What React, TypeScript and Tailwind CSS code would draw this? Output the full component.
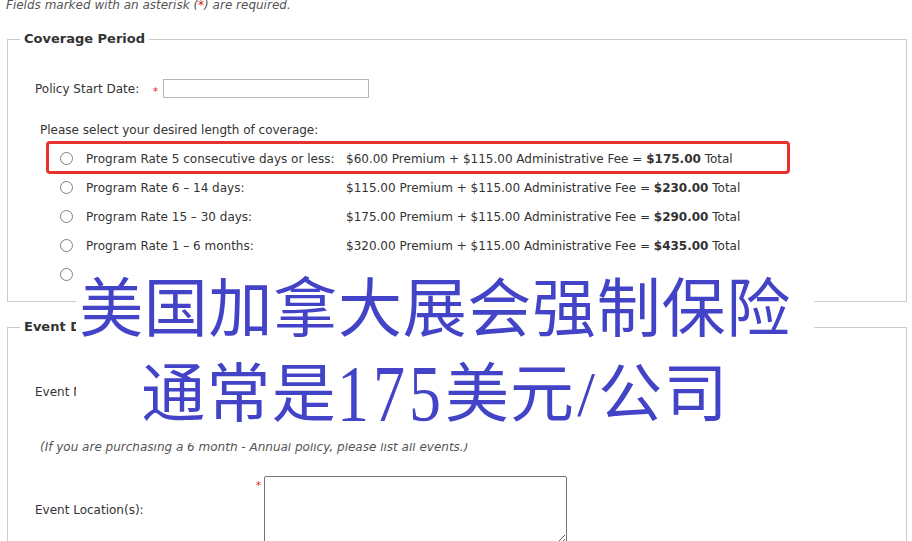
import React from 'react';

type Rate = { label: string; premium: string; total: string };

const rates: Rate[] = [
  { label: 'Program Rate 5 consecutive days or less:', premium: '$60.00', total: '$175.00' },
  { label: 'Program Rate 6 \u2013 14 days:', premium: '$115.00', total: '$230.00' },
  { label: 'Program Rate 15 \u2013 30 days:', premium: '$175.00', total: '$290.00' },
  { label: 'Program Rate 1 \u2013 6 months:', premium: '$320.00', total: '$435.00' },
];

const Radio: React.FC = () => (
  <span className="block w-[13px] h-[13px] rounded-full border border-[#808080] bg-white shrink-0" />
);

const Star: React.FC = () => (
  <span className="text-[#e02020] text-[10px] leading-none">*</span>
);

const App: React.FC = () => {
  return (
    <div
      className="relative w-[912px] h-[541px] overflow-hidden bg-white text-[#333] text-[12px]"
      style={{ fontFamily: '"DejaVu Sans", Verdana, sans-serif' }}
    >
      {/* required note, cut at top */}
      <p className="italic text-[#555] pl-[6px] leading-[12px] -mt-[1px]">
        Fields marked with an asterisk (<span className="text-[#e02020]">*</span>) are required.
      </p>

      {/* Coverage Period */}
      <fieldset className="ml-[7px] mt-[20px] w-[900px] border border-[#cccccc]">
        <legend className="ml-[12px] px-[4px] text-[13px] font-bold text-[#333] leading-[16px]">
          Coverage Period
        </legend>

        <div className="flex items-center pl-[27px] pt-[32px] h-[51px]">
          <span className="w-[118px]">Policy Start Date:</span>
          <span className="self-start pt-[3px] w-[10px]"><Star /></span>
          <span className="block w-[206px] h-[19px] border border-[#b5b5b5] bg-white" />
        </div>

        <p className="pl-[32px] mt-[24px] leading-[16px]">Please select your desired length of coverage:</p>

        <div className="mt-[6px] pb-[12px]">
          {rates.map((r, i) => (
            <div key={i} className="relative flex items-center h-[29px] pl-[52px]">
              {i === 0 && (
                <span className="absolute left-[38px] top-[-3px] w-[744px] h-[33px] border-[3px] border-[#e8302c] rounded-[4px]" />
              )}
              <Radio />
              <span className="ml-[13px] w-[260px] whitespace-nowrap">{r.label}</span>
              <span className="whitespace-nowrap">
                {r.premium} Premium + $115.00 Administrative Fee = <b>{r.total}</b> Total
              </span>
            </div>
          ))}
          <div className="flex items-center h-[29px] pl-[52px]">
            <Radio />
            <span className="ml-[13px]">Program Rate Annual:</span>
          </div>
        </div>
      </fieldset>

      {/* Event Details */}
      <fieldset className="ml-[7px] mt-[17px] w-[900px] border border-[#cccccc]">
        <legend className="ml-[12px] px-[4px] text-[13px] font-bold text-[#333] leading-[16px]">
          Event Details
        </legend>

        <div className="flex items-center pl-[27px] mt-[23px]">
          <span className="w-[221px]">Event Name(s):</span>
          <span className="self-start w-[8px]"><Star /></span>
          <span className="block w-[303px] h-[68px] border border-[#767676] rounded-[2px] bg-white" />
        </div>

        <p className="italic text-[#555] pl-[32px] mt-[13px] leading-[16px]">
          (If you are purchasing a 6 month - Annual policy, please list all events.)
        </p>

        <div className="flex items-center pl-[27px] mt-[21px]">
          <span className="w-[221px]">Event Location(s):</span>
          <span className="self-start w-[8px]"><Star /></span>
          <textarea className="block w-[303px] h-[68px] border border-[#767676] rounded-[2px] bg-white resize-y" />
        </div>
        <div className="h-[20px]" />
      </fieldset>

      {/* Chinese caption laid over the form */}
      <div
        className="absolute left-[76px] top-[262px] w-[738px] h-[181px] bg-white flex flex-col items-center pt-[16px] pr-[20px] text-[#4343c7]"
        style={{ fontFamily: '"Liberation Serif", "Noto Sans CJK SC", serif' }}
      >
        <div className="text-[64px] leading-[64px] tracking-[0.7px] whitespace-nowrap">美国加拿大展会强制保险</div>
        <div className="mt-[21px] text-[64px] leading-[64px] tracking-[1.2px] whitespace-nowrap">
          通常是<span className="inline-block scale-y-[1.25] tracking-[4px]">175</span>美元<span className="px-[2px]">/</span>公司
        </div>
      </div>
    </div>
  );
};

export default App;
